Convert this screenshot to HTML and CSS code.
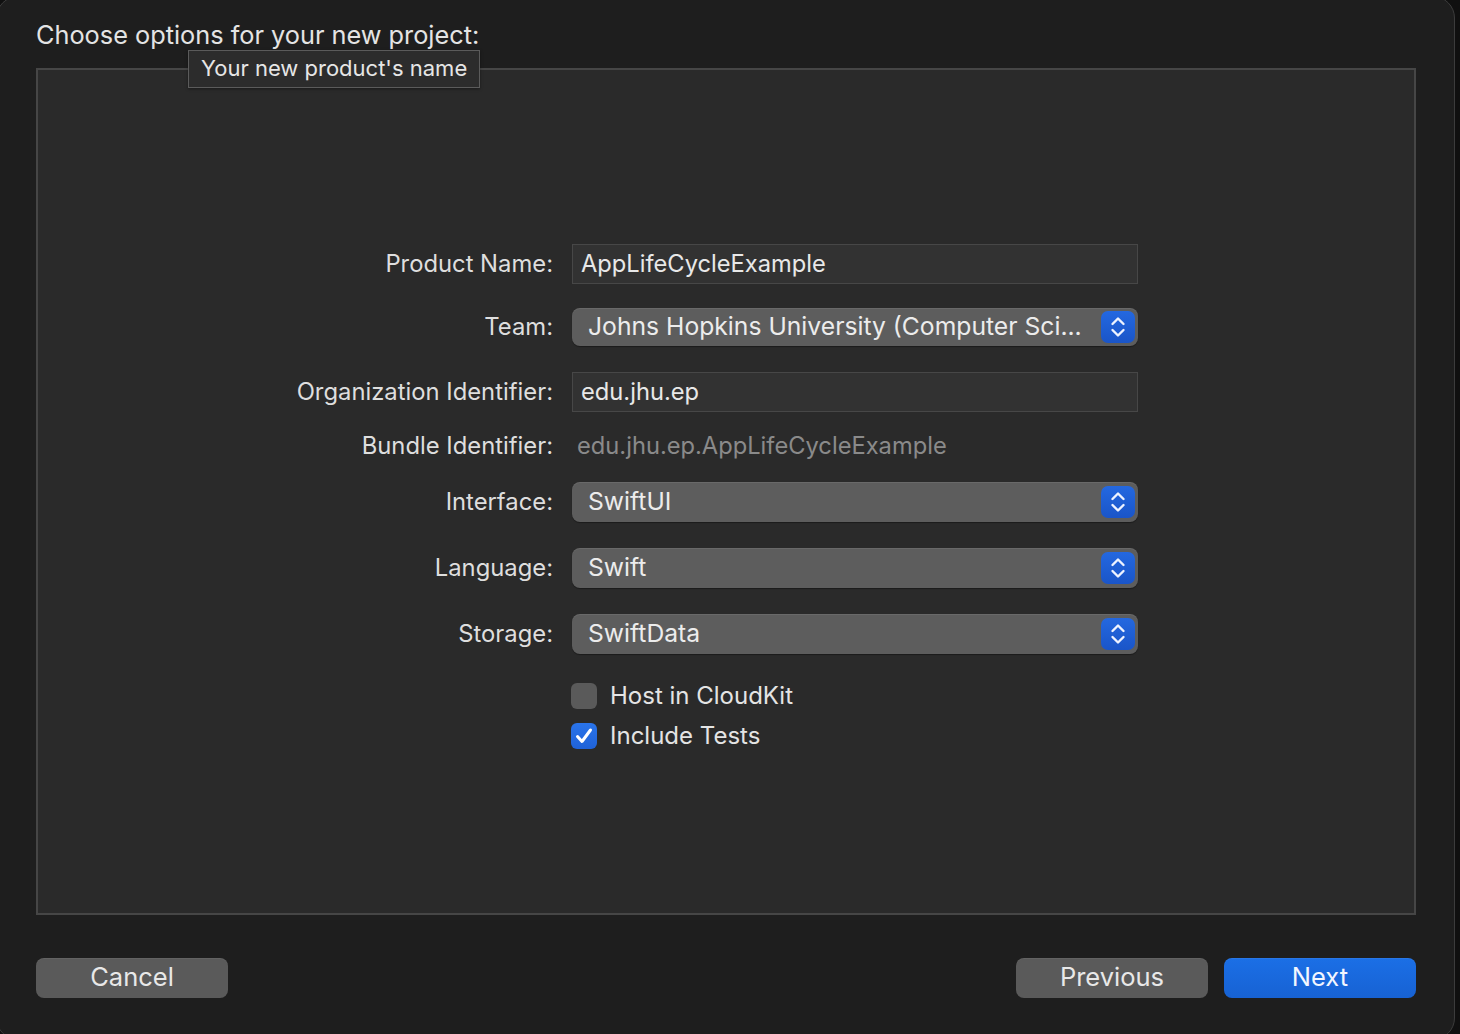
FILE: index.html
```html
<!DOCTYPE html>
<html>
<head>
<meta charset="utf-8">
<link rel="stylesheet" href="styles.css">
</head>
<body>
<div class="window">
  <div class="title">Choose options for your new project:</div>
  <div class="tooltip">Your new product's name</div>
  <div class="panel">
    <div class="form">
      <div class="row r1">
        <div class="label">Product Name:</div>
        <div class="field">AppLifeCycleExample</div>
      </div>
      <div class="row r2">
        <div class="label">Team:</div>
        <div class="popup short">
          <span class="ptext">Johns Hopkins University (Computer Sci...</span>
          <span class="stepper"><svg width="18" height="26" viewBox="0 0 18 26"><path d="M3.5 10 L9 4.5 L14.5 10 M3.5 16 L9 21.5 L14.5 16" fill="none" stroke="#eef3ff" stroke-width="2.4" stroke-linecap="round" stroke-linejoin="round"/></svg></span>
        </div>
      </div>
      <div class="row r3">
        <div class="label">Organization Identifier:</div>
        <div class="field">edu.jhu.ep</div>
      </div>
      <div class="row r4">
        <div class="label">Bundle Identifier:</div>
        <div class="value">edu.jhu.ep.AppLifeCycleExample</div>
      </div>
      <div class="row r5">
        <div class="label">Interface:</div>
        <div class="popup">
          <span class="ptext">SwiftUI</span>
          <span class="stepper"><svg width="18" height="26" viewBox="0 0 18 26"><path d="M3.5 10 L9 4.5 L14.5 10 M3.5 16 L9 21.5 L14.5 16" fill="none" stroke="#eef3ff" stroke-width="2.4" stroke-linecap="round" stroke-linejoin="round"/></svg></span>
        </div>
      </div>
      <div class="row r6">
        <div class="label">Language:</div>
        <div class="popup">
          <span class="ptext">Swift</span>
          <span class="stepper"><svg width="18" height="26" viewBox="0 0 18 26"><path d="M3.5 10 L9 4.5 L14.5 10 M3.5 16 L9 21.5 L14.5 16" fill="none" stroke="#eef3ff" stroke-width="2.4" stroke-linecap="round" stroke-linejoin="round"/></svg></span>
        </div>
      </div>
      <div class="row r7">
        <div class="label">Storage:</div>
        <div class="popup">
          <span class="ptext">SwiftData</span>
          <span class="stepper"><svg width="18" height="26" viewBox="0 0 18 26"><path d="M3.5 10 L9 4.5 L14.5 10 M3.5 16 L9 21.5 L14.5 16" fill="none" stroke="#eef3ff" stroke-width="2.4" stroke-linecap="round" stroke-linejoin="round"/></svg></span>
        </div>
      </div>
      <div class="row r8">
        <div class="label"></div>
        <div class="check"><span class="box"></span><span class="ctext">Host in CloudKit</span></div>
      </div>
      <div class="row r9">
        <div class="label"></div>
        <div class="check"><span class="box on"><svg width="26" height="26" viewBox="0 0 26 26"><path d="M6.5 13.5 L11 18.5 L19.5 7" fill="none" stroke="#ffffff" stroke-width="3" stroke-linecap="round" stroke-linejoin="round"/></svg></span><span class="ctext">Include Tests</span></div>
      </div>
    </div>
  </div>
  <div class="footer">
    <div class="btn">Cancel</div>
    <div class="spacer"></div>
    <div class="btn">Previous</div>
    <div class="btn primary">Next</div>
  </div>
</div>
</body>
</html>
```
FILE: styles.css
```css
html, body {
  margin: 0;
  padding: 0;
  background: #101010;
  width: 1460px;
  height: 1034px;
  overflow: hidden;
}
body {
  font-family: Inter, "Noto Sans", "Liberation Sans", sans-serif;
  color: #e2e2e2;
}
.window {
  position: relative;
  box-sizing: border-box;
  width: 1459px;
  height: 1044px;
  margin: -4px 0 0 -4px;
  background: #1e1e1e;
  border: 1px solid #3c3c3c;
  border-radius: 22px;
  padding: 0 0 0 39px;
}
.title {
  font-size: 25.3px;
  line-height: 30px;
  padding-top: 23px;
  height: 50px;
  box-sizing: border-box;
  color: #e4e4e4;
}
.tooltip {
  position: absolute;
  left: 191px;
  top: 53px;
  width: 292px;
  height: 38px;
  box-sizing: border-box;
  background: #2c2c2c;
  border: 1px solid #5b5b5b;
  font-size: 22px;
  line-height: 35px;
  padding-left: 12px;
  color: #e6e6e6;
  z-index: 2;
  box-shadow: 0 1px 3px rgba(0,0,0,0.4);
}
.panel {
  box-sizing: border-box;
  margin-top: 21px;
  width: 1380px;
  height: 847px;
  background: #2a2a2a;
  border: 2px solid #464646;
  padding-top: 174px;
}
.form {
  display: flex;
  flex-direction: column;
}
.row {
  display: flex;
  align-items: center;
}
.label {
  width: 515px;
  text-align: right;
  font-size: 23.8px;
  color: #dedede;
  flex: none;
}
.field, .popup, .value, .check {
  margin-left: 19px;
}
.field {
  box-sizing: border-box;
  width: 566px;
  height: 40px;
  background: #323232;
  border: 1px solid #474747;
  font-size: 23.7px;
  line-height: 37px;
  padding-left: 8px;
  color: #e8e8e8;
}
.value {
  font-size: 23.7px;
  color: #8a8a8a;
  padding-left: 5px;
}
.popup {
  box-sizing: border-box;
  width: 566px;
  height: 40px;
  background: #5d5d5d;
  border-radius: 8px;
  box-shadow: inset 0 1px 0 rgba(255,255,255,0.08), 0 1px 1px rgba(0,0,0,0.35);
  display: flex;
  align-items: center;
  justify-content: space-between;
  padding: 0 3px 0 16px;
}
.popup.short { height: 38px; }
.ptext {
  font-size: 24.7px;
  color: #ececec;
  margin-top: -2px;
}
.stepper {
  width: 34px;
  height: 32px;
  border-radius: 7px;
  background: linear-gradient(#2468e0, #1a55c8);
  display: flex;
  align-items: center;
  justify-content: center;
}
.r1 { margin-top: 0; height: 40px; }
.r2 { margin-top: 24px; height: 38px; }
.r3 { margin-top: 26px; height: 40px; }
.r4 { margin-top: 19px; height: 30px; }
.r5 { margin-top: 21px; height: 40px; }
.r6 { margin-top: 26px; height: 40px; }
.r7 { margin-top: 26px; height: 40px; }
.r8 { margin-top: 29px; height: 26px; }
.r9 { margin-top: 14px; height: 26px; }
.label, .value, .ctext { margin-top: -2px; }
.check {
  display: flex;
  align-items: center;
  margin-left: 18px;
}
.box {
  width: 26px;
  height: 26px;
  border-radius: 6px;
  background: #5a5a5a;
  display: flex;
  flex: none;
}
.box.on {
  background: linear-gradient(#2a74ea, #1f62d8);
}
.ctext {
  margin-left: 13px;
  font-size: 24px;
  color: #e4e4e4;
}
.footer {
  display: flex;
  margin-top: 43px;
  width: 1380px;
  gap: 16px;
}
.spacer { flex: 1; }
.btn {
  width: 192px;
  height: 40px;
  border-radius: 8px;
  background: #5a5a5a;
  font-size: 25.5px;
  line-height: 38px;
  text-align: center;
  color: #e8e8e8;
  box-shadow: inset 0 1px 0 rgba(255,255,255,0.06);
}
.btn.primary {
  background: linear-gradient(#1b6fe6, #1762d3);
  color: #f2f6ff;
}
```
